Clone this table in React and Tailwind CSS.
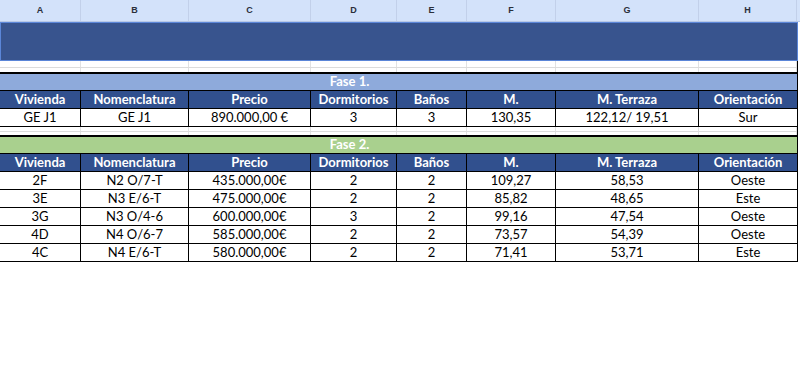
const cols = [81, 108, 122, 86, 70, 89, 143, 98];
const letters = ["A", "B", "C", "D", "E", "F", "G", "H"];
const heads = ["Vivienda", "Nomenclatura", "Precio", "Dormitorios", "Baños", "M.", "M. Terraza", "Orientación"];

const fase1 = [["GE J1", "GE J1", "890.000,00 €", "3", "3", "130,35", "122,12/ 19,51", "Sur"]];
const fase2 = [
  ["2F", "N2 O/7-T", "435.000,00€", "2", "2", "109,27", "58,53", "Oeste"],
  ["3E", "N3 E/6-T", "475.000,00€", "2", "2", "85,82", "48,65", "Este"],
  ["3G", "N3 O/4-6", "600.000,00€", "3", "2", "99,16", "47,54", "Oeste"],
  ["4D", "N4 O/6-7", "585.000,00€", "2", "2", "73,57", "54,39", "Oeste"],
  ["4C", "N4 E/6-T", "580.000,00€", "2", "2", "71,41", "53,71", "Este"],
];

const font = { fontFamily: "Lato, 'Liberation Sans', sans-serif" };

function Row({ cells, head }) {
  return (
    <div className="flex h-[18px] w-[797px] border-b border-black" style={font}>
      {cells.map((c, i) => (
        <div
          key={i}
          style={{ width: cols[i] }}
          className={`flex items-center justify-center shrink-0 text-[13px] leading-none ${
            i < cols.length - 1 ? "border-r border-black" : ""
          } ${head ? "bg-[#31508e] text-white font-bold" : "bg-white text-black"}`}
        >
          {c}
        </div>
      ))}
    </div>
  );
}

function Spacer({ big }) {
  return (
    <div className={`flex w-[797px] flex-col ${big ? "h-[11px]" : "h-[8px]"}`}>
      <div className={`flex ${big ? "h-[6px]" : "h-[4px]"}`}>
        {cols.map((w, i) => (
          <div key={i} style={{ width: w }} className="shrink-0 border-r border-[#e2e2e2]" />
        ))}
      </div>
      <div className="h-px bg-[#dcdcdc]" />
      <div className="flex flex-1">
        {cols.map((w, i) => (
          <div key={i} style={{ width: w }} className="shrink-0 border-r border-[#e2e2e2]" />
        ))}
      </div>
    </div>
  );
}

function Fase({ label, color }) {
  return (
    <div className={`flex h-[19px] w-[797px] border-t-2 border-b border-black ${color}`} style={font}>
      <div className="flex w-[699px] items-center justify-center text-[13px] font-bold text-white">{label}</div>
    </div>
  );
}

export default function App() {
  return (
    <div className="h-[376px] w-[800px] overflow-hidden bg-white">
      <div className="flex h-[22px] w-[800px] border-b border-[#b8c8e6] bg-[#d3e2fa]">
        {cols.map((w, i) => (
          <div
            key={i}
            style={{ width: w }}
            className="flex shrink-0 items-center justify-center border-r border-[#c2d0ea] text-[9px] font-bold text-[#2a2f3a]"
          >
            <span style={{ fontFamily: "'Liberation Sans', Arial, sans-serif" }}>{letters[i]}</span>
          </div>
        ))}
      </div>
      <div className="h-[39px] w-[798px] border border-[#5b86d8] bg-[#38548e]" />
      <div className="w-[798px] border-r-2 border-black">
        <Spacer big />
        <Fase label="Fase 1." color="bg-[#8eaadb]" />
        <Row cells={heads} head />
        {fase1.map((r, i) => (
          <Row key={i} cells={r} />
        ))}
        <Spacer />
        <Fase label="Fase 2." color="bg-[#a9d08e]" />
        <Row cells={heads} head />
        {fase2.map((r, i) => (
          <Row key={i} cells={r} />
        ))}
      </div>
    </div>
  );
}
